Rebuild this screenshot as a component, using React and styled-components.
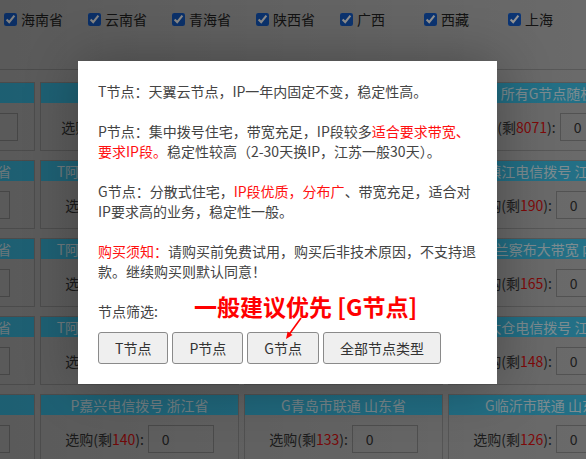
import styled, { createGlobalStyle } from 'styled-components'

const GlobalStyle = createGlobalStyle`
  html, body {
    margin: 0;
    padding: 0;
    overflow: hidden;
  }
  body {
    font-family: "Noto Sans CJK SC", "Noto Sans", sans-serif;
  }
`

const Page = styled.div`
  position: relative;
  width: 586px;
  height: 459px;
  overflow: hidden;
  background-color: #b4b4b4;
`

const FilterBar = styled.div`
  display: flex;
  align-items: flex-start;
  height: 70px;
  box-sizing: border-box;
  padding-top: 9px;
  border-bottom: 1px solid #969696;
`

const Province = styled.label`
  display: flex;
  align-items: center;
  width: 84px;
  flex-shrink: 0;
  font-size: 14px;
  line-height: 20px;
  color: #222;

  input {
    width: 13px;
    height: 13px;
    margin: 0 4px 0 4px;
    accent-color: #155cc8;
  }
`

const Grid = styled.div`
  display: grid;
  grid-template-columns: repeat(4, 199px);
  column-gap: 5px;
  row-gap: 9px;
  margin-left: -164px;
  padding-top: 12px;
`

const Card = styled.div`
  border: 1px solid #969696;
  box-sizing: border-box;
  height: 69px;
`

const CardHead = styled.div`
  height: 20px;
  line-height: 20px;
  background-color: #3bbee4;
  color: #d6eef6;
  font-size: 14px;
  text-align: center;
  white-space: nowrap;
  overflow: hidden;
`

const CardBody = styled.div`
  display: flex;
  align-items: center;
  justify-content: center;
  gap: 4px;
  height: 47px;
  font-size: 14px;
  color: #333;
  white-space: nowrap;
`

const Count = styled.span`
  color: #d81010;
`

const Qty = styled.input`
  width: 66px;
  height: 28px;
  box-sizing: border-box;
  border: 1px solid #8c8c8c;
  background: transparent;
  padding: 0 0 0 13px;
  font-family: "Noto Sans CJK SC", sans-serif;
  font-size: 14px;
  color: #333;
  flex-shrink: 0;
`

const Shade = styled.div`
  position: absolute;
  inset: 0;
  background: linear-gradient(to right, rgba(0, 0, 0, 0.5), rgba(0, 0, 0, 0.41));
`

const Dialog = styled.div`
  position: absolute;
  left: 78px;
  top: 61px;
  width: 419px;
  box-sizing: border-box;
  padding: 20px 19px 20px 20px;
  background-color: #fff;
  box-shadow: 1px 1px 50px rgba(0, 0, 0, 0.3);
  font-size: 14px;
  line-height: 20px;
  color: #444;

  p {
    margin: 0 0 20px;
  }
`

const Red = styled.span`
  color: #ff1010;
`

const PickLabel = styled.div`
  margin-bottom: 11px;
`

const Buttons = styled.div`
  display: flex;
  gap: 4px;
`

const TypeButton = styled.button`
  height: 32px;
  padding: 0 16px;
  border: 1px solid #8a8a8a;
  border-radius: 3px;
  background-color: #efefef;
  font-family: "Noto Sans CJK SC", sans-serif;
  font-size: 14px;
  color: #333;
  cursor: pointer;
`

const Hint = styled.div`
  position: absolute;
  left: 116px;
  top: 234px;
  font-size: 23px;
  line-height: 23px;
  font-weight: 700;
  color: #ff0000;
  white-space: nowrap;
`

const HintArrow = styled.svg`
  position: absolute;
  left: 205px;
  top: 255px;
`

const provinces = ['海南省', '云南省', '青海省', '陕西省', '广西', '西藏', '上海']

const cards = [
  ['所有T节点随机', '10286'],
  ['所有P节点随机', '9562'],
  ['所有节点随机', '27919'],
  ['所有G节点随机', '8071'],
  ['T阿坝州电信拨号 四川省', '186'],
  ['T阿拉善盟电信拨号 内蒙古', '203'],
  ['T安庆市电信拨号 安徽省', '177'],
  ['P镇江电信拨号 江苏省', '190'],
  ['T阿坝州联通拨号 四川省', '172'],
  ['T阿克苏地区电信拨号 新疆', '198'],
  ['G南通市联通 江苏省', '154'],
  ['G乌兰察布大带宽 内蒙古', '165'],
  ['T安阳市电信拨号 河南省', '181'],
  ['T阿勒泰地区联通拨号 新疆', '169'],
  ['G烟台市联通 山东省', '137'],
  ['P太仓电信拨号 江苏省', '148'],
  ['T杭州电信 浙江省', '152'],
  ['P嘉兴电信拨号 浙江省', '140'],
  ['G青岛市联通 山东省', '133'],
  ['G临沂市联通 山东省', '126'],
]

export default function App() {
  return (
    <Page>
      <GlobalStyle />
      <FilterBar>
        {provinces.map((name) => (
          <Province key={name}>
            <input type="checkbox" defaultChecked />
            {name}
          </Province>
        ))}
      </FilterBar>

      <Grid>
        {cards.map(([title, left], i) => (
          <Card key={i}>
            <CardHead>{title}</CardHead>
            <CardBody>
              <span>
                选购(剩<Count>{left}</Count>):
              </span>
              <Qty type="text" defaultValue="0" />
            </CardBody>
          </Card>
        ))}
      </Grid>

      <Shade />

      <Dialog>
        <p>T节点：天翼云节点，IP一年内固定不变，稳定性高。</p>
        <p>
          P节点：集中拨号住宅，带宽充足，IP段较多<Red>适合要求带宽、</Red>
          <br />
          <Red>要求IP段。</Red>稳定性较高（2-30天换IP，江苏一般30天）。
        </p>
        <p>
          G节点：分散式住宅，<Red>IP段优质，分布广</Red>、带宽充足，适合对
          <br />
          IP要求高的业务，稳定性一般。
        </p>
        <p>
          <Red>购买须知：</Red>请购买前免费试用，购买后非技术原因，不支持退
          <br />
          款。继续购买则默认同意！
        </p>
        <PickLabel>节点筛选:</PickLabel>
        <Buttons>
          <TypeButton>T节点</TypeButton>
          <TypeButton>P节点</TypeButton>
          <TypeButton>G节点</TypeButton>
          <TypeButton>全部节点类型</TypeButton>
        </Buttons>

        <Hint>一般建议优先 [G节点]</Hint>
        <HintArrow width="22" height="26" viewBox="0 0 22 26">
          <line x1="18" y1="2" x2="5" y2="20" stroke="#ff0000" strokeWidth="1.6" />
          <polygon points="3,23 9.5,19 4.6,15.6" fill="#ff0000" />
        </HintArrow>
      </Dialog>
    </Page>
  )
}
